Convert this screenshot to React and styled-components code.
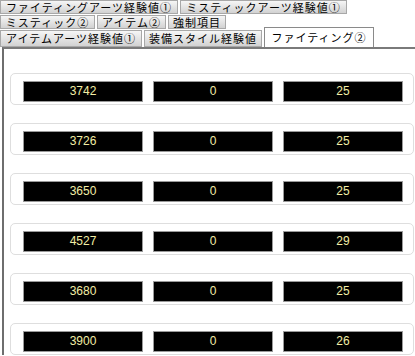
import React from "react";
import styled, { createGlobalStyle } from "styled-components";

const tabRows = [
  {
    height: 14,
    tabs: [
      { label: "ファイティングアーツ経験値①", width: 178 },
      { label: "ミスティックアーツ経験値①", width: 167 },
    ],
  },
  {
    height: 14,
    tabs: [
      { label: "ミスティック②", width: 95 },
      { label: "アイテム②", width: 69 },
      { label: "強制項目", width: 58 },
    ],
  },
  {
    height: 17,
    tabs: [
      { label: "アイテムアーツ経験値①", width: 142 },
      { label: "装備スタイル経験値", width: 118 },
      { label: "ファイティング②", width: 110, active: true },
    ],
  },
];

const rows = [
  [3742, 0, 25],
  [3726, 0, 25],
  [3650, 0, 25],
  [4527, 0, 29],
  [3680, 0, 25],
  [3900, 0, 26],
];

const GlobalStyle = createGlobalStyle`
  body {
    margin: 0;
    background: #ffffff;
    overflow: hidden;
  }
`;

const Page = styled.div`
  width: 415px;
  height: 356px;
  overflow: hidden;
  font-family: "Noto Sans CJK JP", "Liberation Sans", sans-serif;
`;

const TabStrip = styled.div`
  display: flex;
  flex-direction: column;
  gap: 1px;
`;

const TabRow = styled.div`
  display: flex;
  gap: 2px;
  height: ${({ $height }) => $height}px;
  align-items: flex-end;
`;

const Tab = styled.div`
  box-sizing: border-box;
  flex: none;
  width: ${({ $width }) => $width}px;
  height: ${({ $active }) => ($active ? "20px" : "100%")};
  display: flex;
  align-items: center;
  justify-content: center;
  font-size: 11px;
  line-height: 11px;
  letter-spacing: 1px;
  color: #000;
  white-space: nowrap;
  border: 1px solid ${({ $active }) => ($active ? "#8a8a8a" : "#a8a8a8")};
  border-bottom: ${({ $active }) => ($active ? "none" : "1px solid #a8a8a8")};
  background: ${({ $active }) =>
    $active ? "#ffffff" : "linear-gradient(#f6f6f6, #d2d2d2)"};
`;

const Panel = styled.div`
  margin-left: 2px;
  border-top: 2px solid #7a7a7a;
  border-left: 2px solid #6e6e6e;
  padding: 24px 0 0 6px;
  display: flex;
  flex-direction: column;
  gap: 18px;
`;

const RowCard = styled.div`
  box-sizing: border-box;
  width: 404px;
  height: 32px;
  padding: 7px 9px 0 12px;
  border: 1px solid #dedede;
  border-radius: 5px;
  display: flex;
  gap: 10px;
  align-items: flex-start;
`;

const ValueCell = styled.div`
  box-sizing: border-box;
  width: 120px;
  height: 21px;
  background: #000000;
  border: 1px solid #9a9a9a;
  color: #f2eea6;
  font-family: "Liberation Sans", Arial, sans-serif;
  font-size: 12px;
  line-height: 19px;
  text-align: center;
`;

const App = () => {
  return (
    <Page>
      <GlobalStyle />
      <TabStrip>
        {tabRows.map((row, i) => (
          <TabRow key={i} $height={row.height}>
            {row.tabs.map((tab) => (
              <Tab key={tab.label} $width={tab.width} $active={tab.active}>
                {tab.label}
              </Tab>
            ))}
          </TabRow>
        ))}
      </TabStrip>
      <Panel>
        {rows.map((values, i) => (
          <RowCard key={i}>
            {values.map((v, j) => (
              <ValueCell key={j}>{v}</ValueCell>
            ))}
          </RowCard>
        ))}
      </Panel>
    </Page>
  );
};

export default App;
